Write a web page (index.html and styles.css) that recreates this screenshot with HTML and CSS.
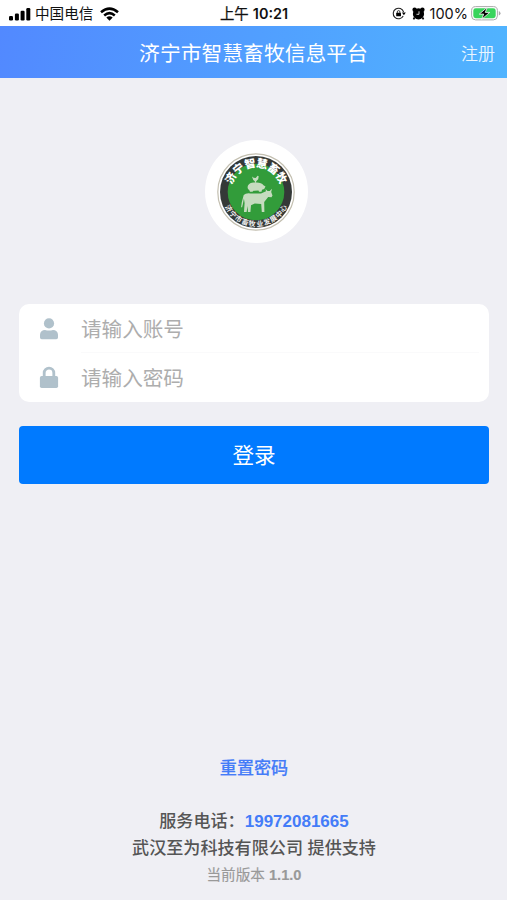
FILE: index.html
```html
<!DOCTYPE html>
<html lang="zh-CN">
<head>
<meta charset="utf-8">
<title>济宁市智慧畜牧信息平台</title>
<link rel="stylesheet" href="styles.css">
</head>
<body>
<div class="status">
  <div class="status-left">
    <svg width="22" height="14" viewBox="0 0 22 14"><rect x="0" y="9" width="4" height="4.5" rx="1.2"/><rect x="5.9" y="6.5" width="4" height="7" rx="1.2"/><rect x="11.6" y="3.8" width="4" height="9.7" rx="1.2"/><rect x="17.3" y="1" width="4" height="12.5" rx="1.2"/></svg>
    <span class="carrier">中国电信</span>
    <svg class="wifi" width="19" height="14" viewBox="0 0 19 14"><g fill="none" stroke="#000" stroke-width="2.6"><path d="M1 5.2Q9.5-1.8 18 5.2"/><path d="M4.2 8.4Q9.5 4 14.8 8.4"/></g><path d="M6.3 10.6Q9.5 8 12.7 10.6L9.5 13.8Z"/></svg>
  </div>
  <div class="time">上午 <b>10:21</b></div>
  <div class="status-right">
    <svg class="lock-icon" width="14" height="13" viewBox="0 0 14 13"><path d="M11.2 9A5.3 5.3 0 1 1 11.6 5" fill="none" stroke="#222" stroke-width="1.1"/><path d="M9.9 5.4h3.9l-1.9 2.9z"/><rect x="4.2" y="5.7" width="4.8" height="3.5" rx=".5"/><path d="M5.3 6V4.9a1.3 1.3 0 0 1 2.6 0V6" fill="none" stroke="#222" stroke-width=".9"/></svg>
    <svg class="alarm" width="13" height="13" viewBox="0 0 13 13"><circle cx="6.5" cy="6.9" r="5.6"/><circle cx="2.6" cy="2.7" r="2.2"/><circle cx="10.4" cy="2.7" r="2.2"/><path d="M2.5 10.5L1.5 12.3M10.5 10.5l1 1.8" stroke="#000" stroke-width="1.7"/><path d="M7 4.3v3H4.5" fill="none" stroke="#fff" stroke-width=".8"/></svg>
    <span class="percent">100%</span>
    <svg class="battery" width="30" height="15" viewBox="0 0 30 15"><rect x=".6" y=".6" width="25.8" height="13.3" rx="4" fill="#fff" stroke="#aaa"/><rect x="2.3" y="2.3" width="22.4" height="9.9" rx="2.4" fill="#39d45c"/><path d="M27.8 5v4.6q1.7-.7 1.7-2.3T27.8 5z" fill="#aaa"/><path d="M16.2 1.4L8.3 8.1h4.4l-2 5.2 8-6.9h-4.4z" stroke="#fff" stroke-width=".8"/></svg>
  </div>
</div>
<header class="header">
  <span></span>
  <h1>济宁市智慧畜牧信息平台</h1>
  <a class="register">注册</a>
</header>
<main class="main">
  <div class="logo">
    <svg width="78" height="78" viewBox="-39 -39 78 78">
      <circle r="38.2" fill="#fff" stroke="#c3bfb0" stroke-width="1.2"/>
      <circle r="36" fill="#343937"/>
      <circle r="28.3" fill="#329c3a"/>
      <g class="logo-top" text-anchor="middle">
        <text y="-25" transform="rotate(-61)">济</text>
        <text y="-25" transform="rotate(-37)">宁</text>
        <text y="-25" transform="rotate(-12)">智</text>
        <text y="-25" transform="rotate(12)">慧</text>
        <text y="-25" transform="rotate(37)">畜</text>
        <text y="-25" transform="rotate(61)">牧</text>
      </g>
      <g class="logo-bottom" text-anchor="middle">
        <text y="34.5" transform="rotate(59)">济</text>
        <text y="34.5" transform="rotate(46)">宁</text>
        <text y="34.5" transform="rotate(33)">市</text>
        <text y="34.5" transform="rotate(20)">畜</text>
        <text y="34.5" transform="rotate(7)">牧</text>
        <text y="34.5" transform="rotate(-7)">业</text>
        <text y="34.5" transform="rotate(-20)">发</text>
        <text y="34.5" transform="rotate(-33)">展</text>
        <text y="34.5" transform="rotate(-46)">中</text>
        <text y="34.5" transform="rotate(-59)">心</text>
      </g>
      <g fill="#c6dcbf">
        <path d="M-4-15.500l1.700 1.300 2 .2 1.900-2.200 1.100.5-.5 3-2 2-.2 1.500h-1l-.2-1.500q-2-1.200-2.200-3z"/>
        <path d="M-8-6.500Q-6-10-1-9.400 5-10 7.500-6.800l2 1.300L8.200-3 6-2.300 5.500-.3H3L2.500-1.500-2.500-1.200-3.500-.3H-6l-.8-1.600Q-9.200-3.400-8-6.500z"/>
        <path d="M-12.300 3Q-10 .8-5.500 1.500L5 1.600 10-.7 9.500-3l2 2 2.200.1 2.300-2.300-.8 3.200 1.300 3.500-1 1.700-3.300-.1-4 5 .2 9.800H5.800L5.200 12l-6.400-.4-3.800 1.700-.6 6.600H-8l-.4-5.900-1 5.900H-12l.6-9-.7-4.400-.9 5-.9 3.800h-1l.7-5z"/>
      </g>
    </svg>
  </div>
  <form class="form">
    <div class="card">
      <label class="row line">
        <svg width="20" height="22" viewBox="0 0 20 22"><circle cx="10" cy="5.4" r="5.1"/><path d="M1 19.5V16.800A5 5 0 0 1 6 11.900q4 1.400 8 0a5 5 0 0 1 5 4.900v2.700q0 1.700-1.700 1.700H2.700Q1 21.200 1 19.500z"/></svg>
        <input type="text" placeholder="请输入账号">
      </label>
      <label class="row">
        <svg width="20" height="22" viewBox="0 0 20 22"><rect x=".9" y="9" width="18.200" height="12" rx="1.800"/><path d="M5.200 10V6a4.800 4.800 0 0 1 9.600 0V10" fill="none" stroke="#b0c1cb" stroke-width="2.800"/></svg>
        <input type="password" placeholder="请输入密码">
      </label>
    </div>
    <button class="login" type="button">登录</button>
  </form>
  <footer class="footer">
    <a class="reset">重置密码</a>
    <div class="phone">服务电话：<b>19972081665</b></div>
    <div class="company">武汉至为科技有限公司 提供支持</div>
    <div class="version">当前版本 <b>1.1.0</b></div>
  </footer>
</main>
</body>
</html>
```
FILE: styles.css
```css
* { box-sizing: border-box; }
body {
  margin: 0;
  height: 900px;
  display: flex;
  flex-direction: column;
  overflow: hidden;
  background: #efeff4;
  font-family: Inter, "Noto Sans CJK SC", sans-serif;
}
svg { display: block; flex: none; overflow: visible; }
.status {
  height: 26px;
  flex: none;
  display: grid;
  grid-template-columns: 1fr auto 1fr;
  align-items: center;
  padding: 1px 6px 0 9px;
  background: #fff;
  color: #111;
  font-size: 14.6px;
  line-height: 20px;
  white-space: nowrap;
}
.status-left, .status-right { display: flex; align-items: center; }
.status-right { justify-content: flex-end; }
.carrier { margin: 0 7px 0 4px; }
.time { margin-right: 2px; font-size: 14.4px; -webkit-text-stroke: .25px #111; }
.time b { font-weight: 600; -webkit-text-stroke: 0; }
.alarm { margin: 0 5px 0 6px; }
.percent { margin-right: 3px; font-size: 14.5px; }
.header {
  height: 52px;
  flex: none;
  display: grid;
  grid-template-columns: 1fr auto 1fr;
  align-items: center;
  padding: 3px 12px 0;
  background: linear-gradient(100deg, #5289ff, #50b4ff);
  color: #fff;
}
.header h1 { margin: 0; font-size: 20.8px; line-height: 30px; font-weight: 400; }
.register { justify-self: end; font-size: 17px; line-height: 24px; font-weight: 350; color: #e9f5ff; }
.main { flex: 1; display: flex; flex-direction: column; padding: 62px 18px 0 19px; }
.logo {
  width: 103px;
  height: 103px;
  display: grid;
  place-items: center;
  align-self: center;
  margin-left: 4px;
  border-radius: 50%;
  background: #fff;
}
.logo-top { font: 900 11px "Noto Sans CJK SC", sans-serif; fill: #fff; }
.logo-bottom { font: 700 7px "Noto Sans CJK SC", sans-serif; fill: #eee; }
.form { margin-top: 61px; }
.card { height: 98px; border-radius: 10px; background: #fff; }
.row { height: 49px; display: flex; align-items: center; padding: 0 10px 0 20px; }
.row svg { fill: #b0c1cb; }
.line { background: linear-gradient(#fafafb, #fafafb) 62px 100% / calc(100% - 72px) 1px no-repeat; }
.row input {
  flex: 1;
  min-width: 0;
  margin: 0 0 1px 22px;
  padding: 0;
  border: 0;
  outline: 0;
  background: transparent;
  font: 400 20.6px/30px "Noto Sans CJK SC", sans-serif;
}
.row input::placeholder { color: #adadad; opacity: 1; }
.login {
  width: 100%;
  height: 58px;
  display: block;
  margin-top: 24px;
  padding: 0 0 2px;
  border: 0;
  border-radius: 4px;
  background: #007aff;
  color: #fff;
  font: 400 21.6px/32px "Noto Sans CJK SC", sans-serif;
}
.footer {
  display: flex;
  flex-direction: column;
  align-items: center;
  margin-top: auto;
  padding-bottom: 14px;
  color: #555;
  font-size: 17.1px;
  line-height: 27px;
  white-space: nowrap;
}
.reset { margin-bottom: 26px; color: #447cf8; font-weight: 500; -webkit-text-stroke: .2px #447cf8; }
.phone, .company { font-weight: 500; }
.phone b { font: 700 17px "Liberation Sans", sans-serif; color: #447cf8; }
.version { color: #999; font-size: 14.6px; line-height: 22px; margin-top: 3px; -webkit-text-stroke: .15px #999; }
.version b { font-family: "Liberation Sans", sans-serif; }
```
